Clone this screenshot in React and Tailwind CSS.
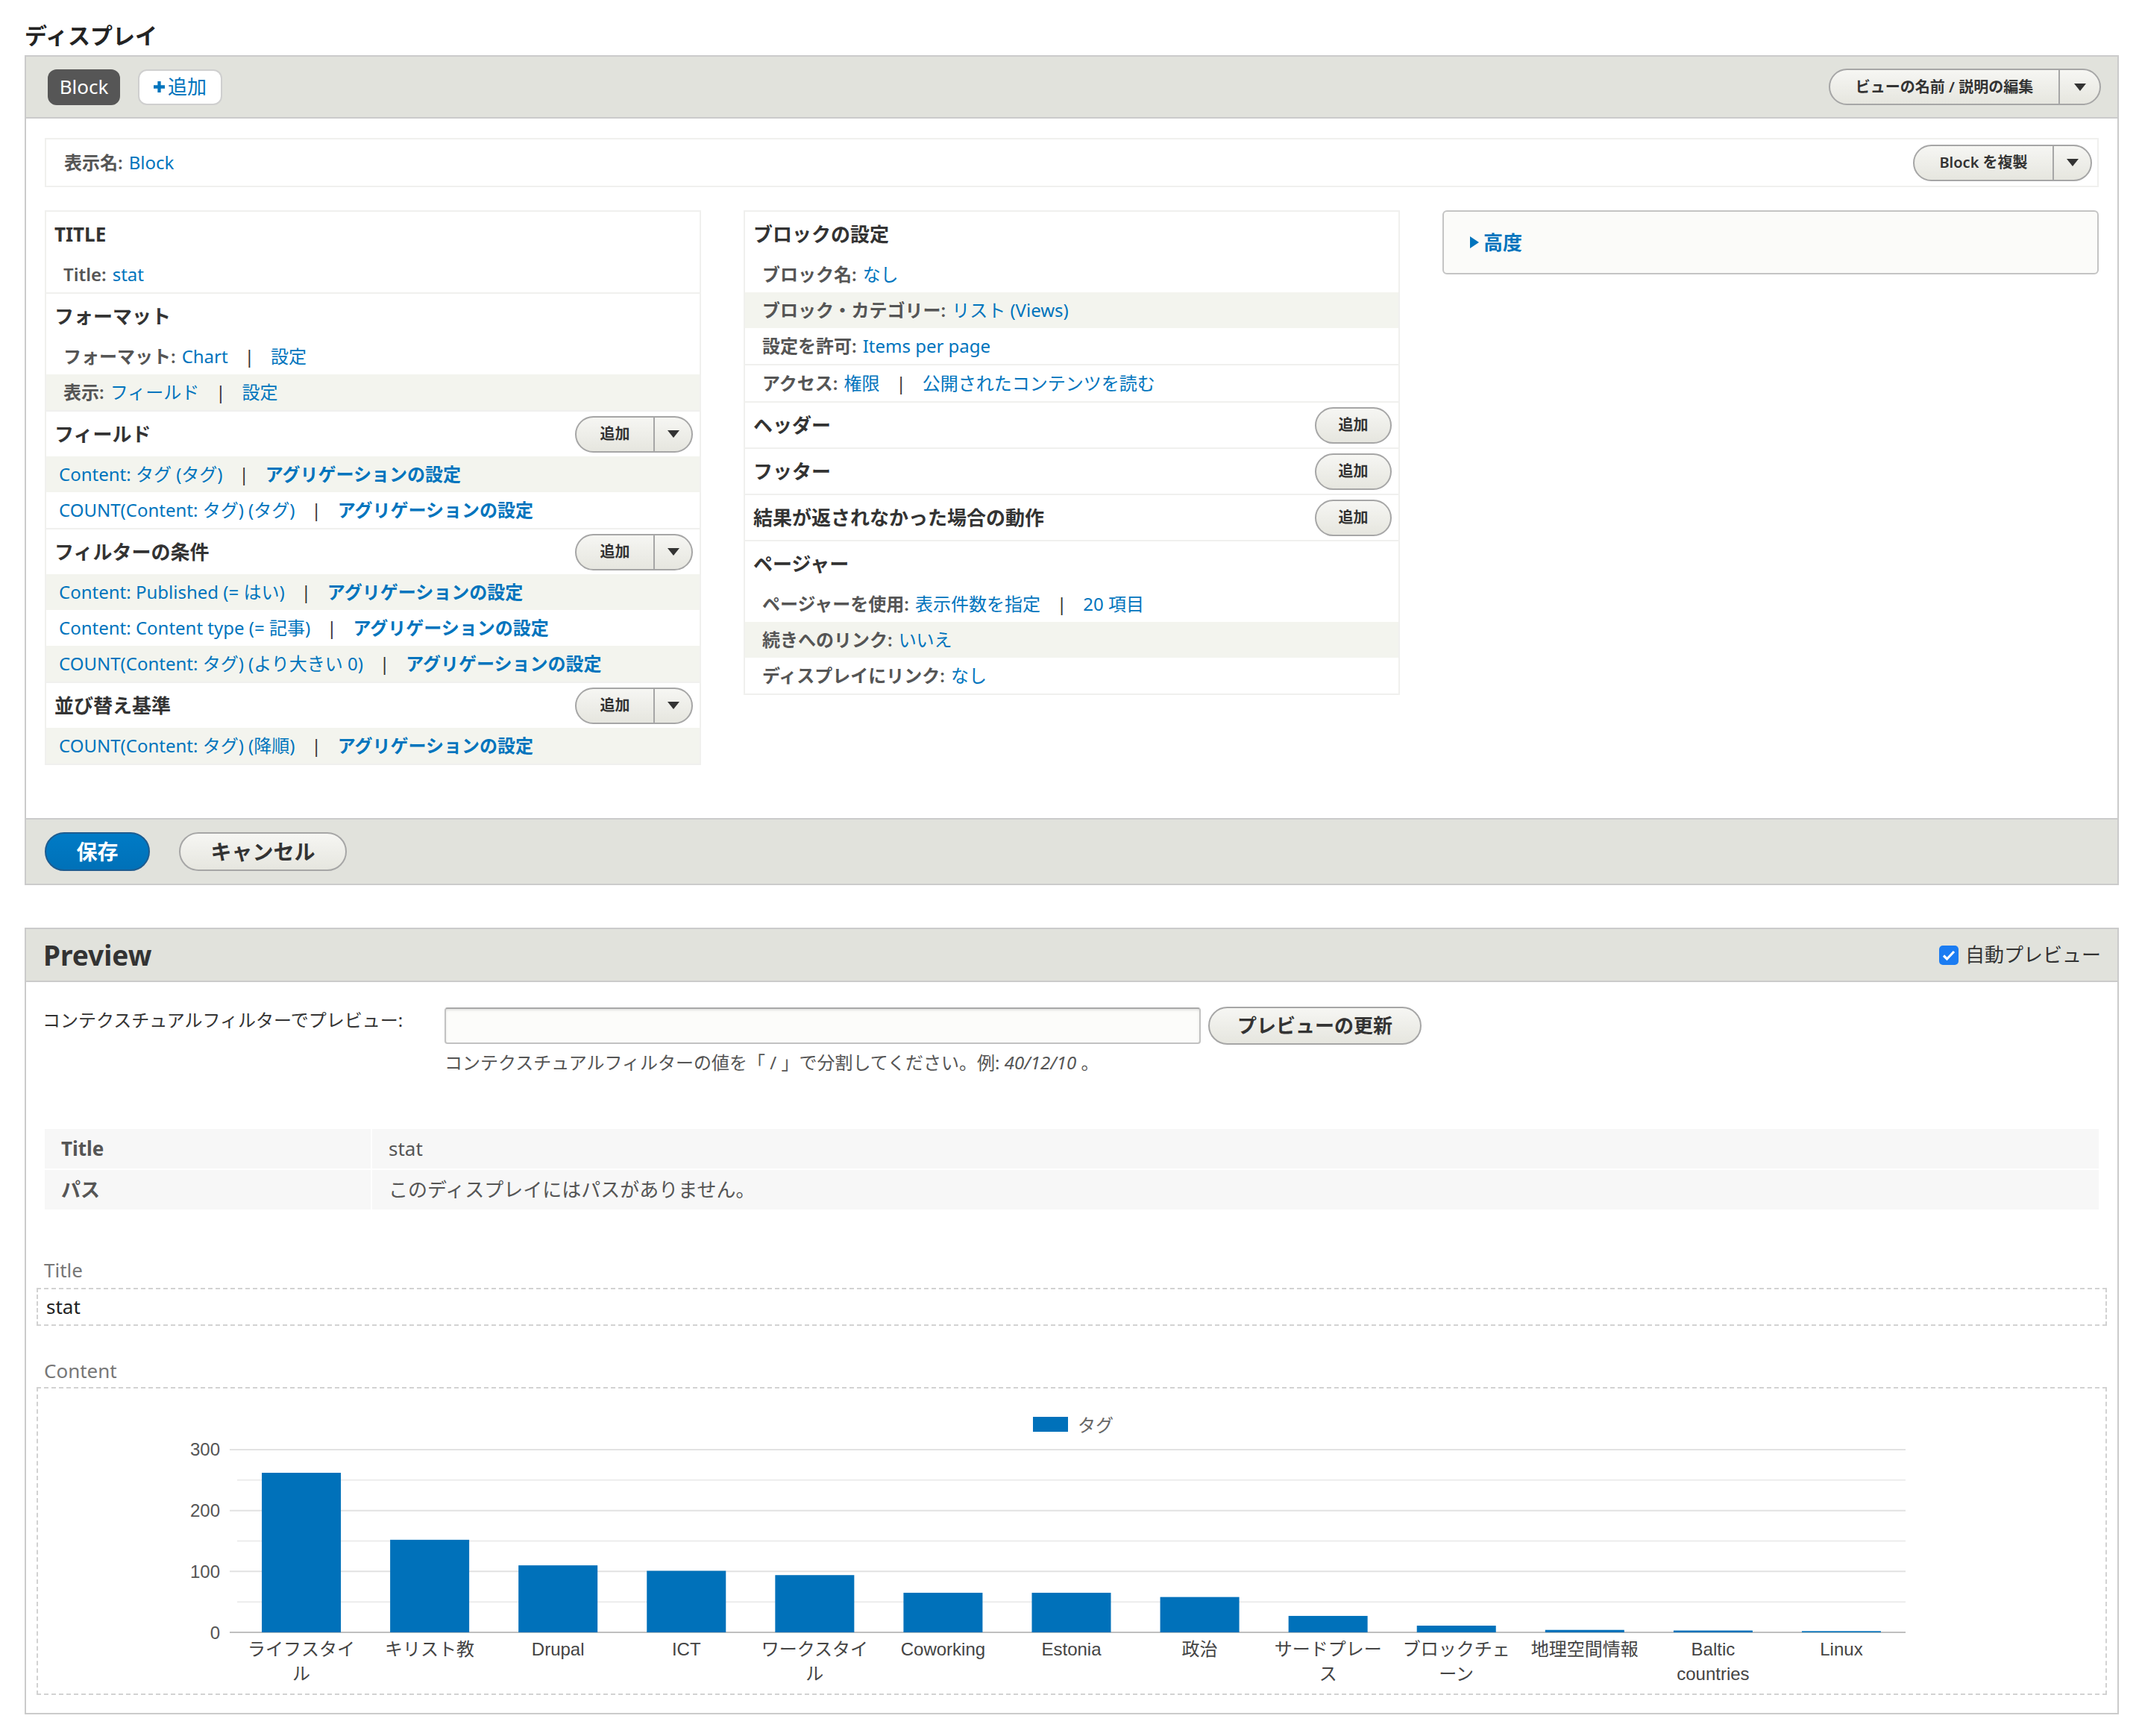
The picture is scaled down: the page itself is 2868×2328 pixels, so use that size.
import React from 'react';

const LINK = 'text-[#0074bd]';
const BTN = 'border-2 border-[#a6a6a6] bg-linear-to-b from-[#f6f6f3] to-[#e6e6df] text-[#333]';

const Caret = () => (
  <svg width="16" height="10" viewBox="0 0 16 10">
    <path d="M0 0h16L8 10z" fill="#333" />
  </svg>
);

const SplitButton = ({ label, mainW, caretW = 51, size = 'text-[20px]' }) => (
  <div className={`flex h-[49px] items-stretch rounded-full ${BTN}`}>
    <span className={`flex items-center justify-center font-semibold ${size} ${mainW}`}>{label}</span>
    <span className={`flex items-center justify-center border-l-2 border-[#a6a6a6] ${caretW === 55 ? 'w-[55px]' : 'w-[51px]'}`}>
      <Caret />
    </span>
  </div>
);

const AddButton = () => (
  <div className={`flex h-[49px] w-[103px] items-center justify-center rounded-full text-[20px] font-semibold ${BTN}`}>追加</div>
);

const Pipe = () => <span className="mx-[22px] text-[#333]">|</span>;

const Heading = ({ children, action }) => (
  <div className="flex h-[60px] items-center justify-between pl-[11px] pr-[9px]">
    <span className="text-[26px] font-bold text-[#333]">{children}</span>
    {action}
  </div>
);

const Row = ({ shaded, handler, children }) => (
  <div className={`flex h-[48px] items-center text-[24px] ${handler ? 'pl-[17px]' : 'pl-[23px]'} ${shaded ? 'bg-[#f3f4ee]' : ''}`}>
    {children}
  </div>
);

const Label = ({ children }) => <span className="mr-[8px] font-semibold text-[#555]">{children}</span>;

const Section = ({ children, first }) => (
  <div className={first ? '' : 'border-t-2 border-[#f0f0ee]'}>{children}</div>
);

const Aggr = () => <span className={`${LINK} font-bold`}>アグリゲーションの設定</span>;

const LeftColumn = () => (
  <div className="border-2 border-[#f0f0ee]">
    <Section first>
      <Heading>TITLE</Heading>
      <Row><Label>Title:</Label><span className={LINK}>stat</span></Row>
    </Section>
    <Section>
      <Heading>フォーマット</Heading>
      <Row><Label>フォーマット:</Label><span className={LINK}>Chart</span><Pipe /><span className={LINK}>設定</span></Row>
      <Row shaded><Label>表示:</Label><span className={LINK}>フィールド</span><Pipe /><span className={LINK}>設定</span></Row>
    </Section>
    <Section>
      <Heading action={<SplitButton label="追加" mainW="w-[103px]" />}>フィールド</Heading>
      <Row shaded handler><span className={LINK}>Content: タグ (タグ)</span><Pipe /><Aggr /></Row>
      <Row handler><span className={LINK}>COUNT(Content: タグ) (タグ)</span><Pipe /><Aggr /></Row>
    </Section>
    <Section>
      <Heading action={<SplitButton label="追加" mainW="w-[103px]" />}>フィルターの条件</Heading>
      <Row shaded handler><span className={LINK}>Content: Published (= はい)</span><Pipe /><Aggr /></Row>
      <Row handler><span className={LINK}>Content: Content type (= 記事)</span><Pipe /><Aggr /></Row>
      <Row shaded handler><span className={LINK}>COUNT(Content: タグ) (より大きい 0)</span><Pipe /><Aggr /></Row>
    </Section>
    <Section>
      <Heading action={<SplitButton label="追加" mainW="w-[103px]" />}>並び替え基準</Heading>
      <Row shaded handler><span className={LINK}>COUNT(Content: タグ) (降順)</span><Pipe /><Aggr /></Row>
    </Section>
  </div>
);

const MiddleColumn = () => (
  <div className="border-2 border-[#f0f0ee]">
    <Section first>
      <Heading>ブロックの設定</Heading>
      <Row><Label>ブロック名:</Label><span className={LINK}>なし</span></Row>
      <Row shaded><Label>ブロック・カテゴリー:</Label><span className={LINK}>リスト (Views)</span></Row>
      <Row><Label>設定を許可:</Label><span className={LINK}>Items per page</span></Row>
    </Section>
    <Section>
      <Row><Label>アクセス:</Label><span className={LINK}>権限</span><Pipe /><span className={LINK}>公開されたコンテンツを読む</span></Row>
    </Section>
    <Section>
      <Heading action={<AddButton />}>ヘッダー</Heading>
    </Section>
    <Section>
      <Heading action={<AddButton />}>フッター</Heading>
    </Section>
    <Section>
      <Heading action={<AddButton />}>結果が返されなかった場合の動作</Heading>
    </Section>
    <Section>
      <Heading>ページャー</Heading>
      <Row><Label>ページャーを使用:</Label><span className={LINK}>表示件数を指定</span><Pipe /><span className={LINK}>20 項目</span></Row>
      <Row shaded><Label>続きへのリンク:</Label><span className={LINK}>いいえ</span></Row>
      <Row><Label>ディスプレイにリンク:</Label><span className={LINK}>なし</span></Row>
    </Section>
  </div>
);

const bars = [
  { label: ['ライフスタイ', 'ル'], v: 262 },
  { label: ['キリスト教'], v: 152 },
  { label: ['Drupal'], v: 110 },
  { label: ['ICT'], v: 101 },
  { label: ['ワークスタイ', 'ル'], v: 94 },
  { label: ['Coworking'], v: 65 },
  { label: ['Estonia'], v: 65 },
  { label: ['政治'], v: 58 },
  { label: ['サードプレー', 'ス'], v: 27 },
  { label: ['ブロックチェ', 'ーン'], v: 11 },
  { label: ['地理空間情報'], v: 4 },
  { label: ['Baltic', 'countries'], v: 3 },
  { label: ['Linux'], v: 2 },
];

const Y0 = 327;
const K = 0.8167;
const X0 = 267;
const X1 = 2504;
const STEP = (X1 - X0) / 13;

const Chart = () => (
  <svg width="2773" height="409" className="block [font-family:'Liberation_Sans','Noto_Sans_CJK_JP',sans-serif]">
    <rect x="1334" y="38" width="47" height="20" fill="#0071ba" />
    <text x="1394" y="49" fontSize="24" fill="#666" dominantBaseline="central">タグ</text>
    {[0, 50, 100, 150, 200, 250, 300].map((v) => (
      <line
        key={v}
        x1={v % 100 === 0 ? X0 - 10 : X0}
        x2={X1}
        y1={Y0 - v * K}
        y2={Y0 - v * K}
        stroke={v === 0 ? '#bfbfbf' : v % 100 === 0 ? '#e2e2e2' : '#ececec'}
        strokeWidth="2"
      />
    ))}
    {[0, 100, 200, 300].map((v) => (
      <text key={v} x="244" y={Y0 - v * K} fontSize="24" fill="#555" textAnchor="end" dominantBaseline="central">
        {v}
      </text>
    ))}
    {bars.map((b, i) => {
      const cx = X0 + STEP / 2 + STEP * i;
      const h = b.v * K;
      return (
        <g key={i}>
          <rect x={cx - 53} y={Y0 - h} width="106" height={h} fill="#0071ba" />
          {b.label.map((t, j) => (
            <text key={j} x={cx} y={349 + j * 33} fontSize="24" fill="#444" textAnchor="middle" dominantBaseline="central">
              {t}
            </text>
          ))}
        </g>
      );
    })}
  </svg>
);

export default function App() {
  return (
    <div className="min-h-[2328px] w-[2868px] bg-white pt-[28px] [font-family:'Noto_Sans','Noto_Sans_CJK_JP',sans-serif]">
      <h2 className="mb-[6px] ml-[33px] text-[30px] font-bold leading-[40px] text-[#232323]">ディスプレイ</h2>

      {/* Display editor */}
      <div className="ml-[33px] w-[2808px] border-2 border-[#cbcbcb]">
        <div className="flex h-[83px] items-center justify-between border-b-2 border-[#cbcbcb] bg-[#e1e2dc] pl-[29px] pr-[22px]">
          <div className="flex items-center gap-[24px]">
            <span className="flex h-[48px] w-[97px] items-center justify-center rounded-[12px] bg-[#565656] text-[26px] text-white">Block</span>
            <span className="flex h-[48px] w-[113px] items-center justify-center gap-[4px] rounded-[12px] border-2 border-[#cfcfcf] bg-white text-[26px] text-[#0074bd]">
              <svg width="15" height="15" viewBox="0 0 14 14">
                <path d="M5 0h4v5h5v4H9v5H5V9H0V5h5z" fill="#0074bd" />
              </svg>
              追加
            </span>
          </div>
          <SplitButton label="ビューの名前 / 説明の編集" mainW="w-[306px]" caretW={55} />
        </div>

        <div className="px-[25px] pb-[71px] pt-[26px]">
          <div className="flex h-[66px] items-center justify-between border-2 border-[#f0f0ee] pl-[24px] pr-[7px] text-[24px]">
            <div>
              <Label>表示名:</Label>
              <span className={LINK}>Block</span>
            </div>
            <SplitButton label="Block を複製" mainW="w-[185px]" />
          </div>

          <div className="mt-[31px] grid grid-cols-3 items-start gap-x-[57px]">
            <LeftColumn />
            <MiddleColumn />
            <div className="flex h-[86px] items-center gap-[6px] rounded-[6px] border-2 border-[#c4c4c4] bg-[#fbfbf9] pl-[35px]">
              <svg width="12" height="16" viewBox="0 0 12 16">
                <path d="M0 0l12 8-12 8z" fill="#0074bd" />
              </svg>
              <span className="text-[26px] font-bold text-[#0074bd]">高度</span>
            </div>
          </div>
        </div>

        <div className="flex h-[88px] items-center gap-[39px] border-t-2 border-[#cbcbcb] bg-[#e1e2dc] pl-[25px]">
          <span className="flex h-[52px] w-[141px] items-center justify-center rounded-full border-2 border-[#1e5c90] bg-linear-to-b from-[#007bc6] to-[#0071b8] text-[28px] font-bold text-white">保存</span>
          <span className={`flex h-[52px] w-[225px] items-center justify-center rounded-full text-[28px] font-bold ${BTN}`}>キャンセル</span>
        </div>
      </div>

      {/* Preview */}
      <div className="ml-[33px] mt-[57px] w-[2808px] border-2 border-[#cbcbcb]">
        <div className="flex h-[71px] items-center justify-between border-b-2 border-[#cbcbcb] bg-[#e1e2dc] pl-[23px] pr-[22px]">
          <span className="text-[37px] font-bold text-[#333]">Preview</span>
          <label className="flex items-center gap-[9px] text-[26px] text-[#333]">
            <span className="flex h-[26px] w-[26px] items-center justify-center rounded-[5px] bg-[#1b7cf2]">
              <svg width="18" height="16" viewBox="0 0 18 16">
                <path d="M2 8.5l4.5 4.5L16 3" stroke="#fff" strokeWidth="3.2" fill="none" />
              </svg>
            </span>
            自動プレビュー
          </label>
        </div>

        <div className="px-[14px] pb-[24px] pt-[33px]">
          <div className="flex items-start">
            <span className="w-[547px] shrink-0 pl-[8px] pt-[2px] text-[24px] leading-[32px] text-[#333]">コンテクスチュアルフィルターでプレビュー:</span>
            <div>
              <div className="flex items-center gap-[10px]">
                <div className="h-[49px] w-[1014px] rounded-[4px] border-2 border-[#c2c2c2] border-t-[#a8a8a8] bg-[#fcfcfa] shadow-[inset_0_2px_3px_rgba(0,0,0,0.1)]" />
                <span className={`flex h-[51px] w-[286px] items-center justify-center rounded-full text-[26px] font-bold ${BTN}`}>プレビューの更新</span>
              </div>
              <p className="mt-[8px] text-[24px] leading-[32px] text-[#555]">
                コンテクスチュアルフィルターの値を「 / 」で分割してください。例: <em>40/12/10</em> 。
              </p>
            </div>
          </div>

          <div className="mx-[11px] mt-[73px] flex flex-col gap-[2px] text-[26px] text-[#555]">
            <div className="flex gap-[2px]">
              <div className="flex h-[53px] w-[437px] items-center bg-[#f7f7f7] pl-[22px] font-bold">Title</div>
              <div className="flex h-[53px] flex-1 items-center bg-[#f7f7f7] pl-[22px]">stat</div>
            </div>
            <div className="flex gap-[2px]">
              <div className="flex h-[53px] w-[437px] items-center bg-[#f7f7f7] pl-[22px] font-bold">パス</div>
              <div className="flex h-[53px] flex-1 items-center bg-[#f7f7f7] pl-[22px]">このディスプレイにはパスがありません。</div>
            </div>
          </div>

          <div className="mt-[65px] pl-[10px] text-[26px] leading-[32px] text-[#777]">Title</div>
          <div className="mt-[8px] flex h-[51px] items-center border-2 border-dashed border-[#d2d2d2] pl-[11px] text-[26px] text-[#222]">stat</div>

          <div className="mt-[44px] pl-[10px] text-[26px] leading-[32px] text-[#777]">Content</div>
          <div className="mt-[6px] h-[413px] border-2 border-dashed border-[#d2d2d2]">
            <Chart />
          </div>
        </div>
      </div>
    </div>
  );
}
